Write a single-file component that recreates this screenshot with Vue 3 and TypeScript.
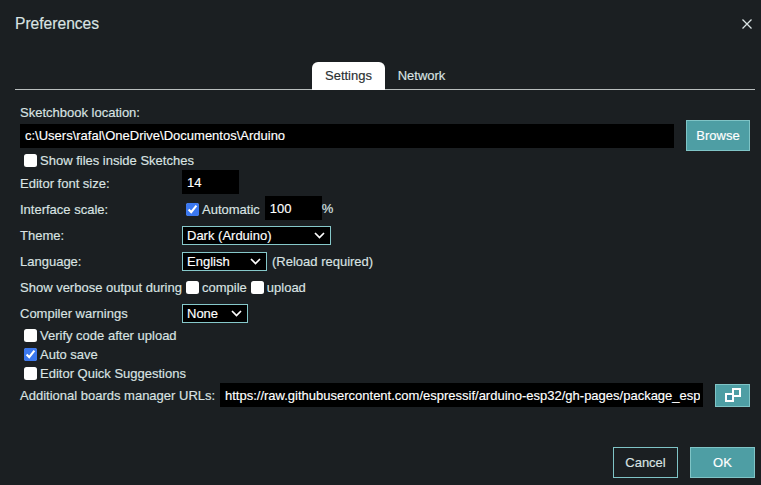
<script setup lang="ts">
const rowChecks: { label: string; checked: boolean }[] = [
  { label: 'Verify code after upload', checked: false },
  { label: 'Auto save', checked: true },
  { label: 'Editor Quick Suggestions', checked: false },
]
</script>

<template>
  <div class="dialog">
    <header class="head">
      <h1 class="title">Preferences</h1>
      <button class="close" aria-label="Close">
        <svg width="10" height="10" viewBox="0 0 10 10"><path d="M.5.5l9 9M9.5.5l-9 9" stroke="#dae3e3" stroke-width="1.3" fill="none" /></svg>
      </button>
    </header>

    <nav class="tabs">
      <div class="tab active">Settings</div>
      <div class="tab">Network</div>
    </nav>

    <main class="settings">
      <div class="sketch-label">Sketchbook location:</div>
      <div class="location">
        <input class="field grow" value="c:\Users\rafal\OneDrive\Documentos\Arduino" />
        <button class="btn primary browse">Browse</button>
      </div>
      <label class="check-row"><input type="checkbox" />Show files inside Sketches</label>

      <div class="row">
        <span class="label">Editor font size:</span>
        <input class="field small" value="14" />
      </div>
      <div class="row">
        <span class="label">Interface scale:</span>
        <label class="auto"><input type="checkbox" checked />Automatic</label>
        <input class="field small scale" value="100" />
        <span class="pct">%</span>
      </div>
      <div class="row center">
        <span class="label">Theme:</span>
        <div class="select theme"><span>Dark (Arduino)</span><svg width="11" height="7" viewBox="0 0 11 7"><path d="M1 1l4.5 4.5L10 1" stroke="#fff" stroke-width="1.7" fill="none" /></svg></div>
      </div>
      <div class="row center">
        <span class="label">Language:</span>
        <div class="select lang"><span>English</span><svg width="11" height="7" viewBox="0 0 11 7"><path d="M1 1l4.5 4.5L10 1" stroke="#fff" stroke-width="1.7" fill="none" /></svg></div>
        <span class="hint">(Reload required)</span>
      </div>
      <div class="row center">
        <span class="label">Show verbose output during</span>
        <label class="verbose"><input type="checkbox" />compile</label>
        <label class="verbose"><input type="checkbox" />upload</label>
      </div>
      <div class="row center">
        <span class="label">Compiler warnings</span>
        <div class="select warn"><span>None</span><svg width="11" height="7" viewBox="0 0 11 7"><path d="M1 1l4.5 4.5L10 1" stroke="#fff" stroke-width="1.7" fill="none" /></svg></div>
      </div>

      <label v-for="c in rowChecks" :key="c.label" class="check-row"><input type="checkbox" :checked="c.checked" />{{ c.label }}</label>

      <div class="boards">
        <span class="boards-label">Additional boards manager URLs:</span>
        <input class="field grow url" value="https://raw.githubusercontent.com/espressif/arduino-esp32/gh-pages/package_esp32_index.json" />
        <button class="btn primary copy" aria-label="Edit URLs">
          <svg width="16" height="14" viewBox="0 0 16 14" fill="none" stroke="#fff" stroke-width="2">
            <rect x="8" y="1" width="7" height="7" />
            <rect x="1" y="6" width="7" height="7" fill="#3f8ea3" />
          </svg>
        </button>
      </div>
    </main>

    <footer class="foot">
      <button class="btn ghost">Cancel</button>
      <button class="btn primary ok">OK</button>
    </footer>
  </div>
</template>

<style>
html, body { margin: 0; background: #1b1f22; }
</style>

<style scoped>
.dialog {
  width: 761px;
  height: 485px;
  box-sizing: border-box;
  display: flex;
  flex-direction: column;
  overflow: hidden;
  background: #1b1f22;
  color: #dae3e3;
  font-family: "Liberation Sans", Arial, sans-serif;
  font-size: 13px;
  -webkit-text-stroke: 0.15px;
}
.head {
  height: 62px;
  flex: none;
  box-sizing: border-box;
  display: flex;
  justify-content: space-between;
  padding: 15px 9px 0 15px;
}
.title {
  margin: 0;
  font-size: 15.6px;
  font-weight: 400;
  line-height: 18px;
}
.close {
  width: 10px;
  height: 10px;
  padding: 0;
  margin-top: 4px;
  border: 0;
  background: none;
  display: flex;
}
.tabs {
  flex: none;
  height: 28px;
  box-sizing: border-box;
  margin: 0 6px 0 15px;
  display: flex;
  justify-content: center;
  border-bottom: 1px solid #b9bebe;
}
.tab {
  width: 73px;
  height: 28px;
  line-height: 28px;
  text-align: center;
  box-sizing: border-box;
}
.tab.active {
  background: #fff;
  color: #2a3033;
  border-radius: 6px 6px 0 0;
}
.settings {
  flex: none;
  padding: 15px 11px 0 20px;
  display: flex;
  flex-direction: column;
}
.sketch-label { height: 15px; line-height: 15px; }
.location {
  height: 31px;
  display: flex;
  align-items: center;
  gap: 12px;
}
.field {
  height: 24px;
  box-sizing: border-box;
  border: 0;
  outline: 0;
  padding: 0 5px;
  background: #000;
  color: #fff;
  font: inherit;
  min-width: 0;
}
.url { padding-right: 3px; }
.grow { flex: 1; }
.small { width: 57px; }
.btn {
  box-sizing: border-box;
  font: inherit;
  padding: 0;
  color: #fff;
}
.primary {
  background: #4e9ea4;
  border: 1px solid #7fc4c6;
}
.browse { width: 64px; height: 31px; }
.check-row {
  height: 19px;
  display: flex;
  align-items: center;
  padding-left: 4px;
}
input[type="checkbox"] {
  width: 13px;
  height: 13px;
  margin: 0 3px 0 0;
  accent-color: #3b78f0;
}
input[type="checkbox"]:not(:checked) {
  appearance: none;
  background: #fff;
  border-radius: 2.5px;
}
.row {
  height: 26px;
  display: flex;
  align-items: flex-start;
}
.row.center { align-items: center; }
.row .label {
  width: 162px;
  flex: none;
  align-self: flex-start;
  box-sizing: border-box;
  height: 26px;
  padding-top: 2px;
  line-height: 24px;
  white-space: nowrap;
}
.auto { display: flex; align-items: center; height: 26px; margin-left: 4px; }
.scale { margin-left: 5px; }
.pct { line-height: 26px; }
.select {
  height: 19px;
  box-sizing: border-box;
  border: 1px solid #86c8ca;
  background: #000;
  color: #fff;
  display: flex;
  align-items: center;
  justify-content: space-between;
  padding: 0 5px 0 4px;
}
.theme { width: 149px; }
.lang { width: 85px; }
.warn { width: 66px; }
.hint { margin-left: 5px; }
.verbose { display: flex; align-items: center; }
.verbose:first-of-type { margin-left: 4px; }
.verbose + .verbose { margin-left: 4px; }
.boards {
  height: 24px;
  display: flex;
  align-items: center;
}
.boards-label { width: 200px; flex: none; white-space: nowrap; }
.copy {
  width: 35px;
  height: 23px;
  margin-left: 12px;
  flex: none;
  display: flex;
  align-items: center;
  justify-content: center;
}
.foot {
  margin-top: auto;
  display: flex;
  justify-content: flex-end;
  gap: 12px;
  padding: 0 6px 7px 0;
}
.foot .btn { width: 65px; height: 31px; }
.ghost { background: transparent; border: 1px solid #7fc4c6; color: #dae3e3; }
</style>
